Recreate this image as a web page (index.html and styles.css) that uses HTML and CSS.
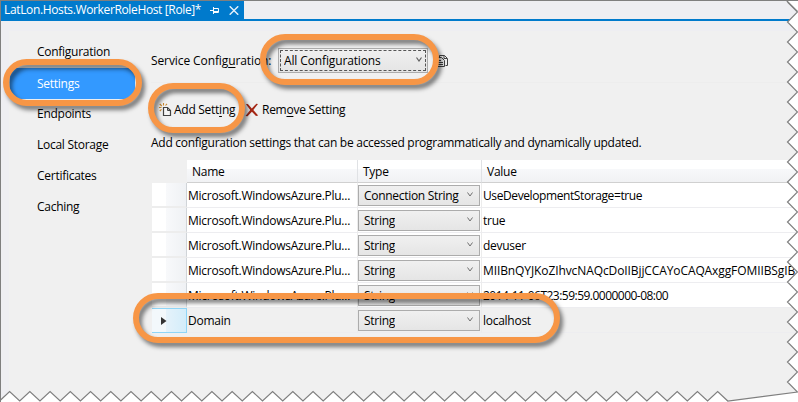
FILE: index.html
```html
<!DOCTYPE html>
<html lang="en">
<head>
<meta charset="utf-8">
<title>LatLon.Hosts.WorkerRoleHost [Role]</title>
<link rel="stylesheet" href="styles.css">
</head>
<body>
<div class="window">
  <header class="tabs">
    <div class="tab">
      <span class="tab-title">LatLon.Hosts.WorkerRoleHost [Role]*</span>
      <svg class="pin" width="9" height="7" viewBox="0 0 9 7"><path d="M0 3.5h3M3.5 0v7M3.5 1.5h5v4h-5M3.5 4.5h5" fill="none" stroke="#fff"/></svg>
      <svg class="close" width="10" height="9" viewBox="0 0 10 9"><path d="M.7.3l8.6 8.4M9.3.3L.7 8.7" stroke="#e4f1fb" stroke-width="1.5"/></svg>
    </div>
  </header>
  <div class="page">
    <nav class="nav">
      <a>Configuration</a>
      <a class="selected">Settings</a>
      <a>Endpoints</a>
      <a>Local Storage</a>
      <a>Certificates</a>
      <a>Caching</a>
    </nav>
    <main class="content">
      <div class="service">
        <span class="service-label">Service Config<u>u</u>ration:</span>
        <div class="combo big"><span>All Configurations</span><svg width="6" height="5" viewBox="0 0 6 5"><path d="M.5.5L3 4 5.500.5" fill="none" stroke="#606060" stroke-width="1.2"/></svg></div>
        <svg class="copy" width="14" height="14" viewBox="0 0 14 14"><path d="M4.500 3V1.500h5l3 3v7h-2M9 1.500v3h3" fill="none" stroke="#424242"/><path d="M1.500 3.500h5l3 3v6h-8z" fill="#f0f0f0" stroke="#424242"/><path d="M3 6.500h3M3 8.500h5M3 10.500h5" stroke="#424242"/></svg>
      </div>
      <div class="toolbar">
        <svg width="13" height="14" viewBox="0 0 13 14"><path d="M4.500 4.500h4l3 3v5h-7z" fill="#f5f5f5" stroke="#424242" stroke-width="1.2"/><path d="M8.500 4.500v3h3" fill="none" stroke="#424242"/><path d="M0 4.500h2.500M.8 1l2 2M4.500 0v2.500M8 .8L6.500 2.500M.8 8l1.700-1.700" stroke="#c8872d" stroke-width="1.1"/></svg>
        <span class="add">Add Sett<u>i</u>ng</span>
        <svg class="remove-icon" width="14" height="14" viewBox="0 0 14 14"><path d="M1 1.200C2.500.5 3 1 4 2.300L6.800 5.600 11.300.8 13 1 8.300 7l4.900 5.500-2.200.6L6.900 8.700 2.500 13.300.5 13 5.200 7z" fill="#a52714"/></svg>
        <span class="remove">Rem<u>o</u>ve Setting</span>
      </div>
      <p class="hint">Add configuration settings that can be accessed programmatically and dynamically updated.</p>
      <div class="grid">
        <div class="row head"><i></i><b>Name</b><b>Type</b><b>Value</b></div>
        <div class="row"><i></i><span class="name">Microsoft.WindowsAzure.Plu...</span><div class="cell"><div class="combo"><span class="conn">Connection String</span><svg width="6" height="5" viewBox="0 0 6 5"><path d="M.5.5L3 4 5.500.5" fill="none" stroke="#707070"/></svg></div></div><span class="value setting">UseDevelopmentStorage=true</span></div>
        <div class="row"><i></i><span class="name">Microsoft.WindowsAzure.Plu...</span><div class="cell"><div class="combo"><span>String</span><svg width="6" height="5" viewBox="0 0 6 5"><path d="M.5.5L3 4 5.500.5" fill="none" stroke="#707070"/></svg></div></div><span class="value">true</span></div>
        <div class="row"><i></i><span class="name">Microsoft.WindowsAzure.Plu...</span><div class="cell"><div class="combo"><span>String</span><svg width="6" height="5" viewBox="0 0 6 5"><path d="M.5.5L3 4 5.500.5" fill="none" stroke="#707070"/></svg></div></div><span class="value">devuser</span></div>
        <div class="row"><i></i><span class="name">Microsoft.WindowsAzure.Plu...</span><div class="cell"><div class="combo"><span>String</span><svg width="6" height="5" viewBox="0 0 6 5"><path d="M.5.5L3 4 5.500.5" fill="none" stroke="#707070"/></svg></div></div><span class="value key">MIIBnQYJKoZIhvcNAQcDoIIBjjCCAYoCAQAxggFOMIIBSgIB</span></div>
        <div class="row"><i></i><span class="name">Microsoft.WindowsAzure.Plu...</span><div class="cell"><div class="combo"><span>String</span><svg width="6" height="5" viewBox="0 0 6 5"><path d="M.5.5L3 4 5.500.5" fill="none" stroke="#707070"/></svg></div></div><span class="value date">2014-11-06T23:59:59.0000000-08:00</span></div>
        <div class="row current"><i><svg width="6" height="8" viewBox="0 0 6 8"><path d="M0 0l5.500 4L0 8z" fill="#333"/></svg></i><span class="name domain">Domain</span><div class="cell"><div class="combo"><span>String</span><svg width="6" height="5" viewBox="0 0 6 5"><path d="M.5.5L3 4 5.500.5" fill="none" stroke="#707070"/></svg></div></div><span class="value">localhost</span></div>
      </div>
    </main>
  </div>
  <div class="ring ring-nav"></div>
  <div class="ring ring-combo"></div>
  <div class="ring ring-add"></div>
  <div class="ring ring-row"></div>
  <svg class="torn" width="798" height="402" viewBox="0 0 798 402"><path fill="#fff" stroke="#7f7f7f" stroke-width="1.200" d="M-.5 401l10.110-9.500 10.120 9.500 10.110-9.500 10.120 9.500 10.110-9.500 10.120 9.500 10.110-9.500 10.120 9.500 10.110-9.500 10.120 9.500 10.110-9.500 10.120 9.500 10.110-9.500 10.120 9.500 10.110-9.500 10.120 9.500 10.110-9.500 10.120 9.500 10.110-9.500 10.120 9.500 10.110-9.500 10.120 9.500 10.110-9.500 10.120 9.500 10.110-9.500 10.120 9.500 10.110-9.500 10.120 9.500 10.110-9.500 10.120 9.500 10.110-9.500 10.120 9.500 10.110-9.500 10.120 9.500 10.110-9.500 10.120 9.500 10.110-9.500 10.120 9.500 10.110-9.500 10.120 9.500 10.110-9.500 10.120 9.500 10.110-9.500 10.120 9.500 10.110-9.500 10.120 9.500 10.110-9.500 10.120 9.500 10.110-9.500 10.120 9.500 10.110-9.500 10.120 9.500 10.110-9.500 10.120 9.500 10.110-9.500 10.120 9.500 10.110-9.500 10.120 9.500 10.110-9.500 10.120 9.500 10.110-9.500 10.120 9.500 10.110-9.500 10.120 9.500 10.110-9.500 10.120 9.500 10.110-9.500 10.120 9.500 10.110-9.500 10.120 9.500 10.110-9.500 10.120 9.500L797.500 392l-10-10 10-10-10-10 10-10-10-10 10-10-10-10 10-10-10-10 10-10-10-10 10-10-10-10 10-10-10-10 10-10-10-10 10-10-10-10 10-10-10-10 10-10-10-10 10-10-10-10 10-10-10-10 10-10-10-10 10-10-10-10 10-10-10-10 10-10-10-10 10-10-10-10 10-10-10-10L797.500 11.500 786 0V-3H802V406H-3z"/></svg>
</div>
</body>
</html>
```
FILE: styles.css
```css
* { box-sizing: border-box; }
body { margin: 0; background: #fff; }
.window {
  position: relative;
  width: 798px;
  height: 402px;
  overflow: hidden;
  border-top: 1px solid #7f7f7f;
  border-left: 1px solid #7f7f7f;
  background: #eeeef2;
  font: 12px/16px "Open Sans", "Noto Sans", sans-serif;
  letter-spacing: -0.27px;
  color: #000;
  white-space: nowrap;
}
u { text-underline-offset: 2px; text-decoration-thickness: 1px; }
.tabs { height: 20px; border-bottom: 2px solid #007acc; }
.tab {
  display: flex;
  align-items: center;
  width: 243px;
  height: 18px;
  padding: 0 5px 0 3px;
  background: #007acc;
  color: #fff;
}
.tab-title { width: 207px; letter-spacing: -0.36px; }
.close { margin-left: 10px; }
.page {
  display: flex;
  height: 370px;
  margin: 10px 0 0 8px;
  background: #f0f0f0;
}
.nav { display: flex; flex-direction: column; width: 142px; padding: 6px 16px 0 1px; }
.nav a { height: 31px; padding: 7px 0 0 27px; }
.nav .selected { padding-top: 8px; background: #3399ff; color: #fff; }
.content { flex: 1; min-width: 0; }
.service { display: flex; align-items: center; height: 52px; padding-top: 8px; border-bottom: 1px solid #ededed; }
.service-label { width: 127px; letter-spacing: -0.1px; }
.combo {
  display: flex;
  align-items: center;
  justify-content: space-between;
  width: 122px;
  height: 21px;
  padding: 0 6px 0 5px;
  border: 1px solid #acacac;
  background: linear-gradient(#f0f0f0, #e5e5e5);
}
.combo svg { flex: none; margin-top: -3px; }
.combo.big { width: 150px; height: 25px; padding: 0 5px; letter-spacing: -0.13px; outline: 1px dashed #555; outline-offset: -3px; }
.copy { margin-left: 7px; }
.toolbar { display: flex; align-items: center; height: 54px; padding-left: 8px; }
.add { width: 66px; margin-left: 2px; }
.remove-icon { margin-left: 5px; }
.remove { margin-left: 3px; }
.hint { margin: -2px 0 0; height: 25px; }
.grid { margin-left: 1px; }
.row { display: grid; grid-template-columns: 35px 171px 124px 1fr; height: 25px; background: #fff; }
.row > * { border-bottom: 1px solid #ededf0; }
.row > i {
  border-right: 1px solid #d0d4d8;
  border-bottom: 2px solid #ededed;
  background: linear-gradient(90deg, #fff 14px, #f8f9fb 14px, #eff1f4);
}
.row .name, .row .cell { border-right: 1px solid #ececec; }
.name, .value { padding: 5px 0 0 1px; overflow: hidden; }
.name { letter-spacing: -0.26px; }
.setting { letter-spacing: -0.4px; }
.key { letter-spacing: -0.1px; }
.date { letter-spacing: -0.52px; }
.cell { padding: 2px 0 0; }
.combo span { overflow: hidden; }
.combo .conn { width: 96px; letter-spacing: -0.3px; }
.head { height: 23px; }
.head b { padding: 4px 0 0 5px; font-weight: 400; border-right: 1px solid #e0e2e5; border-bottom: 1px solid #d0d0d0; background: linear-gradient(#fff 9px, #f7f8fa 9px, #f1f2f4); }
.head > i { background: #f0f0f0; border-color: #f0f0f0; }
.current { background: #f0f0f0; }
.current > i { display: flex; align-items: center; padding-left: 9px; border: 1px solid #8fd5f7; border-left: 0; background: linear-gradient(90deg, #f3f8fb 14px, #e5f2fa 14px, #d3edfa); }
.ring {
  position: absolute;
  border: 6px solid #f79646;
  border-radius: 25px;
  filter: drop-shadow(3px 4px 2px rgba(0, 0, 0, .5));
}
.ring-nav { left: 2px; top: 58px; width: 139px; height: 47px; }
.ring-combo { left: 259px; top: 33px; width: 179px; height: 51px; }
.ring-add { left: 147px; top: 82px; width: 97px; height: 50px; }
.ring-row { left: 132px; top: 292px; width: 427px; height: 50px; }
.torn { position: absolute; left: -1px; top: -1px; }
```
